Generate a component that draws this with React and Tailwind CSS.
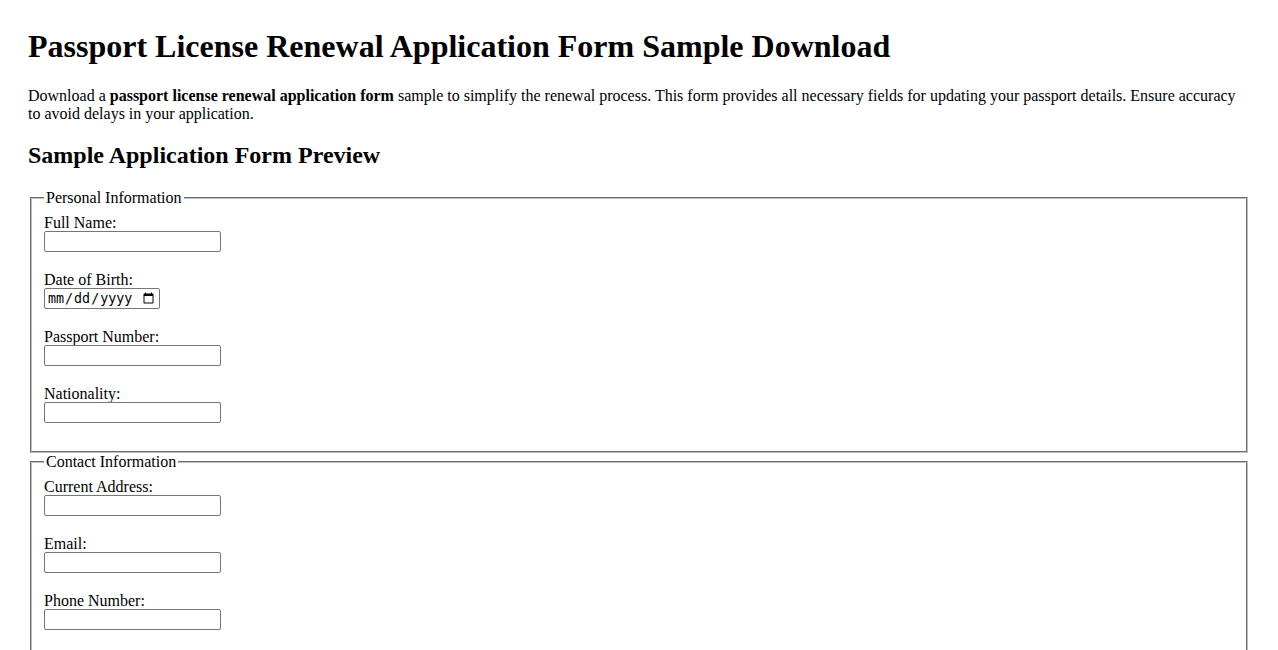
import React from "react";

const Field = ({ label, type = "text" }) => {
  const isDate = type === "date";
  return (
    <div className="flex flex-col items-start">
      <label className="block h-[18px] leading-[20px]">{label}</label>
      <input
        type={type}
        className={
          isDate
            ? "block h-[21px] w-[116px] rounded-[2px] border border-[#767676] bg-white px-[2px] py-[1px] text-[13.33px] text-black [font-family:'DejaVu_Sans_Mono',monospace]"
            : "block h-[21px] w-[177px] rounded-[2px] border border-[#767676] bg-white px-[2px] py-[1px] text-[13.33px] [font-family:Arial,'Liberation_Sans',sans-serif]"
        }
      />
      <div className="h-[18px]" />
    </div>
  );
};

const Section = ({ title, children }) => (
  <fieldset className="mx-[2px] border-2 border-[#c0c0c0] px-3 pt-[6px] pb-[10px] [border-style:groove]">
    <legend className="px-[2px] leading-[18px]">{title}</legend>
    {children}
  </fieldset>
);

export default function App() {
  return (
    <div className="min-h-screen bg-white px-[28px] pt-[28px] pb-10 text-[16px] text-black [font-family:'Liberation_Serif','Times_New_Roman',serif]">
      <h1 className="mb-[22px] text-[32px] font-bold leading-[37px]">
        Passport License Renewal Application Form Sample Download
      </h1>
      <p className="leading-[18px]">
        Download a <strong>passport license renewal application form</strong> sample to simplify the
        renewal process. This form provides all necessary fields for updating your passport details.
        Ensure accuracy to avoid delays in your application.
      </p>
      <h2 className="mt-[18px] mb-[20px] text-[24px] font-bold leading-[28px]">
        Sample Application Form Preview
      </h2>

      <form>
        <Section title="Personal Information">
          <Field label="Full Name:" />
          <Field label="Date of Birth:" type="date" />
          <Field label="Passport Number:" />
          <Field label="Nationality:" />
        </Section>
        <Section title="Contact Information">
          <Field label="Current Address:" />
          <Field label="Email:" />
          <Field label="Phone Number:" />
        </Section>
        <Section title="Renewal Details">
          <Field label="Reason for Renewal:" />
          <Field label="Previous Passport Expiry Date:" type="date" />
        </Section>
      </form>
    </div>
  );
}
